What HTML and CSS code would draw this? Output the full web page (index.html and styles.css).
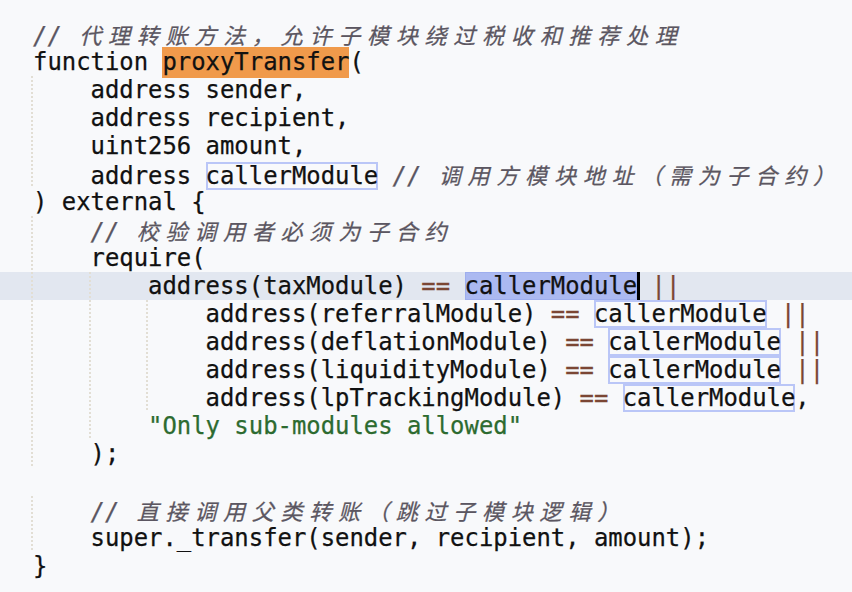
FILE: index.html
```html
<!DOCTYPE html>
<html lang="zh">
<head>
<meta charset="utf-8">
<title>proxyTransfer</title>
<link rel="stylesheet" href="styles.css">
</head>
<body>
<div class="editor">
  <div class="line"><span class="c">// <span class="cjk">代理转账方法，允许子模块绕过税收和推荐处理</span></span></div>
  <div class="line">function <span class="fn">proxyTransfer</span>(</div>
  <div class="line"><span class="ind g"></span>address sender,</div>
  <div class="line"><span class="ind g"></span>address recipient,</div>
  <div class="line"><span class="ind g"></span>uint256 amount,</div>
  <div class="line"><span class="ind g"></span>address <span class="occ">callerModule</span> <span class="c">// <span class="cjk">调用方模块地址（需为子合约）</span></span></div>
  <div class="line">) external {</div>
  <div class="line"><span class="ind g"></span><span class="c">// <span class="cjk">校验调用者必须为子合约</span></span></div>
  <div class="line"><span class="ind g"></span>require(</div>
  <div class="line current"><span class="ind g"></span><span class="ind g"></span>address(taxModule) <span class="op">==</span> <span class="sel">callerModule</span><span class="cursor"></span> <span class="op">||</span></div>
  <div class="line"><span class="ind g"></span><span class="ind g"></span><span class="ind g"></span>address(referralModule) <span class="op">==</span> <span class="occ">callerModule</span> <span class="op">||</span></div>
  <div class="line"><span class="ind g"></span><span class="ind g"></span><span class="ind g"></span>address(deflationModule) <span class="op">==</span> <span class="occ">callerModule</span> <span class="op">||</span></div>
  <div class="line"><span class="ind g"></span><span class="ind g"></span><span class="ind g"></span>address(liquidityModule) <span class="op">==</span> <span class="occ">callerModule</span> <span class="op">||</span></div>
  <div class="line"><span class="ind g"></span><span class="ind g"></span><span class="ind g"></span>address(lpTrackingModule) <span class="op">==</span> <span class="occ">callerModule</span>,</div>
  <div class="line"><span class="ind g"></span><span class="ind g"></span><span class="str">"Only sub-modules allowed"</span></div>
  <div class="line"><span class="ind g"></span>);</div>
  <div class="line"></div>
  <div class="line"><span class="ind g"></span><span class="c">// <span class="cjk">直接调用父类转账（跳过子模块逻辑）</span></span></div>
  <div class="line"><span class="ind g"></span>super._transfer(sender, recipient, amount);</div>
  <div class="line">}</div>
</div>
</body>
</html>
```

FILE: styles.css
```css
html, body {
  margin: 0;
  padding: 0;
  background: #f8f9fb;
}

.editor {
  padding-top: 20px;
  font-family: "DejaVu Sans Mono", "Noto Sans CJK SC", monospace;
  font-size: 23.9px;
  color: #111111;
  -webkit-text-stroke: 0.25px currentColor;
}

.line {
  height: 28px;
  line-height: 28px;
  padding-left: 33px;
  white-space: pre;
}

.line.current {
  background: #e2e7f0;
}

.ind {
  display: inline-block;
  width: 4ch;
  height: 28px;
  vertical-align: top;
  position: relative;
}

.ind.g::before {
  content: "";
  position: absolute;
  left: -2px;
  top: 0;
  bottom: 0;
  width: 2px;
  background: repeating-linear-gradient(to bottom, #e2ded4 0 2px, transparent 2px 4px);
}

.c {
  color: #5b5661;
  font-style: italic;
}

.cjk {
  font-family: "Noto Sans CJK SC", sans-serif;
  font-size: 22px;
  letter-spacing: 6.78px;
  padding-left: 3px;
}

.fn {
  background: #f09a4b;
  padding: 1px 0 2px;
}

.op {
  color: #7b4634;
}

.str {
  color: #2d6b30;
}

.occ {
  box-shadow: inset 0 0 0 2px #bac6f7;
}

.sel {
  background: #abb9f1;
  box-shadow: inset 0 0 0 1px #9eaeee;
}

.cursor {
  display: inline-block;
  width: 3px;
  height: 28px;
  margin-right: -3px;
  vertical-align: top;
  background: #000;
}
```
